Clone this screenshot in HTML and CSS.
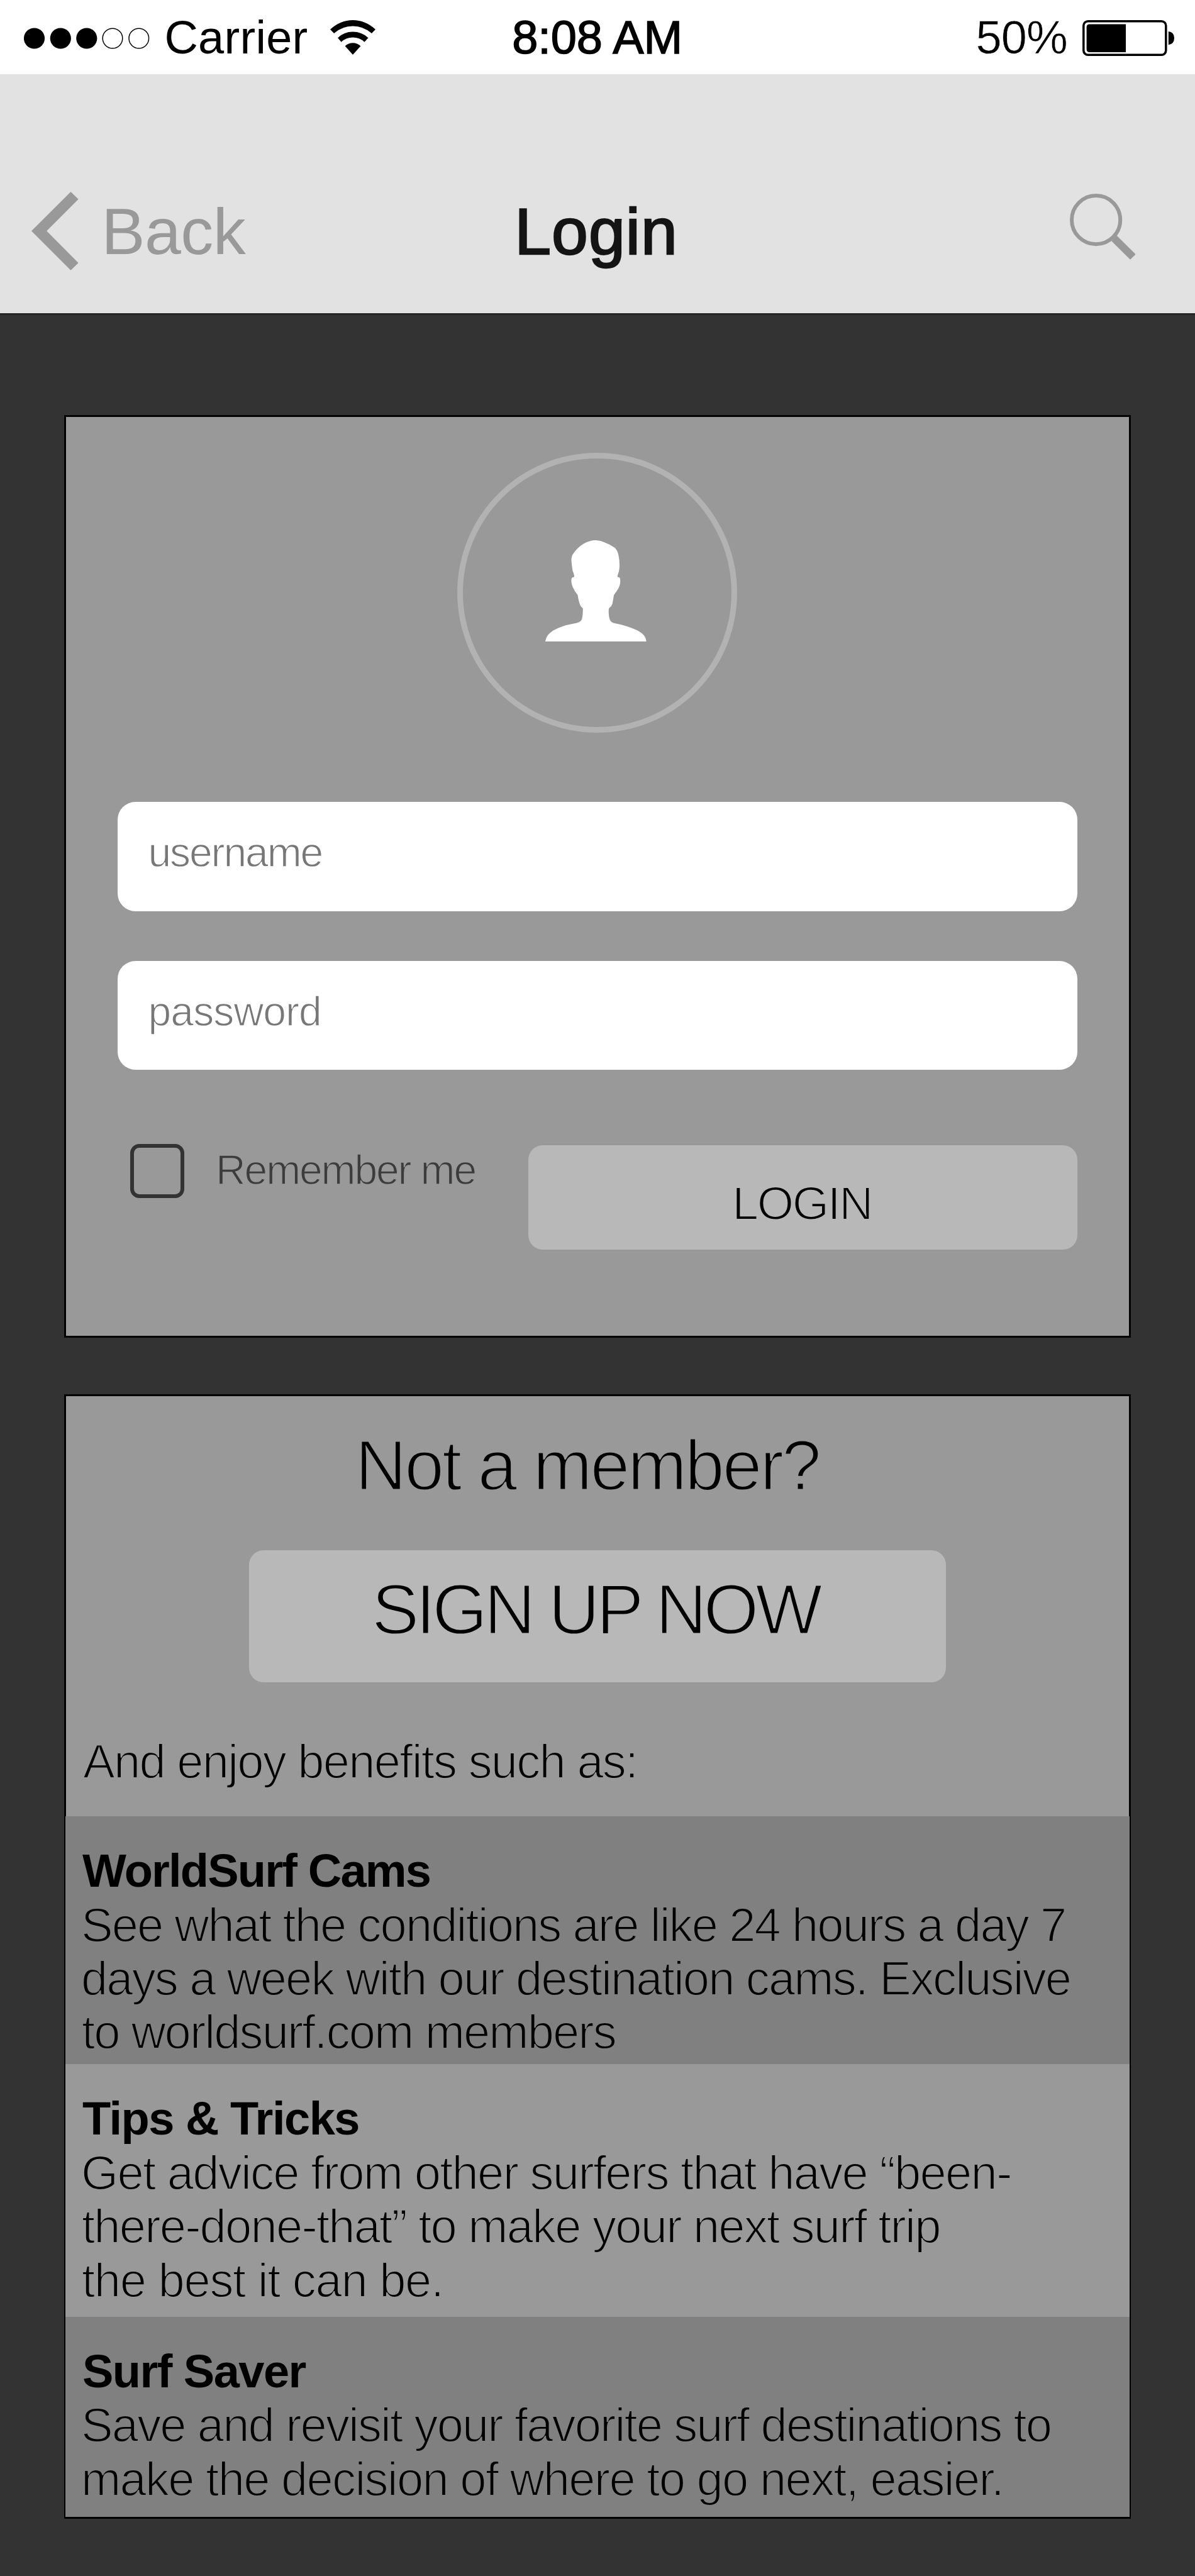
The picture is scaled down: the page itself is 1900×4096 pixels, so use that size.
FILE: index.html
```
<!DOCTYPE html>
<html lang="en">
<head>
<meta charset="utf-8">
<title>Login</title>
<link rel="stylesheet" href="styles.css">
</head>
<body>
<div class="status">
  <svg class="dots" viewBox="0 0 200 34">
    <g fill="#000"><circle cx="16.5" cy="17" r="16.6"/><circle cx="58.3" cy="17" r="16.6"/><circle cx="99.8" cy="17" r="16.6"/></g>
    <g fill="none" stroke="#000" stroke-width="1.5"><circle cx="141" cy="17" r="15.8"/><circle cx="182.8" cy="17" r="15.8"/></g>
  </svg>
  <span class="carrier">Carrier</span>
  <svg class="wifi" viewBox="866 98 119 168" preserveAspectRatio="none">
    <path d="M866 143Q893 98 925.500 98Q958 98 985 143L975 162Q953 127 925.500 127Q898 127 876 162Z"/>
    <path d="M886 184Q902 154.500 925.500 154.500Q949 154.500 966 184L956 204Q943 182 925.500 182Q908 182 895 204Z"/>
    <path d="M905 224Q914 209 925.500 209Q937 209 946 224L925.500 266Z"/>
  </svg>
  <span class="time">8:08 AM</span>
  <span class="percent">50%</span>
  <svg class="battery" viewBox="0 0 147 57">
    <rect x="1.800" y="1.800" width="131" height="53.400" rx="7" fill="none" stroke="#000" stroke-width="3.500"/>
    <path d="M69 6.500V51H11Q6.600 51 6.600 46V11.500Q6.600 6.500 11 6.500Z"/>
    <path d="M136.800 18Q146 19 146 28.500Q146 38 136.800 39.300Z"/>
  </svg>
</div>

<div class="nav">
  <div class="back">
    <svg class="chevron" viewBox="0 0 75 125"><path fill="#999" d="M62.500 0L74.600 11.800L24.200 62.200L74.600 112.900L62.500 124.700L0 62.200Z"/></svg>
    <span class="back-label">Back</span>
  </div>
  <div class="title">Login</div>
  <svg class="search" viewBox="0 0 104.500 105" fill="none" stroke="#999">
    <circle cx="41.600" cy="41.700" r="38.600" stroke-width="6"/>
    <path d="M70.500 71L100.300 100.600" stroke-width="12"/>
  </svg>
</div>

<main class="page">
  <section class="card login-card">
    <div class="avatar">
      <svg class="person" viewBox="577 598 411 444" preserveAspectRatio="none">
        <path fill="#fff" d="M577 1042Q580 1020 592 1008C608 988 650 970 690 963C710 959 721 956 726 943Q730 925 730 897Q729 893 724 890Q718 884 715 870Q710 850 709 838Q707 834 703 829Q697 822 694 813C687 803 683 787 683 775Q683 762 688 760Q695 761 695 755Q694 746 688 731Q684 705 683 685Q684 666 690 658Q708 630 732 614Q757 598 783 598Q802 599 820 608Q842 617 859 630Q872 643 875 664Q880 688 879 715Q878 733 873 746Q870 755 871 759Q874 760 879 761Q883 767 882 778C882 797 873 812 866 823Q857 835 856 839Q853 860 850 876Q846 889 838 894Q835 896 835 903Q834 930 840 946Q844 958 862 962Q905 971 942 988C970 1001 987 1016 988 1042Z"/>
      </svg>
    </div>
    <div class="field username">username</div>
    <div class="field password">password</div>
    <div class="actions">
      <span class="checkbox"></span>
      <span class="remember">Remember me</span>
      <div class="button login-button">LOGIN</div>
    </div>
  </section>

  <section class="card member-card">
    <div class="question">Not a member?</div>
    <div class="button signup-button">SIGN UP NOW</div>
    <div class="intro">And enjoy benefits such as:</div>
    <div class="benefit cams">
      <div class="heading h-cams">WorldSurf Cams</div>
      <div class="line t4">See what the conditions are like 24 hours a day 7</div>
      <div class="line t3">days a week with our destination cams. Exclusive</div>
      <div class="line t4 nudge">to worldsurf.com members</div>
    </div>
    <div class="benefit tips">
      <div class="heading h-tips">Tips &amp; Tricks</div>
      <div class="line t1">Get advice from other surfers that have “been-</div>
      <div class="line t2 nudge">there-done-that” to make your next surf trip</div>
      <div class="line t0 nudge">the best it can be.</div>
    </div>
    <div class="benefit saver">
      <div class="heading h-saver">Surf Saver</div>
      <div class="line t3">Save and revisit your favorite surf destinations to</div>
      <div class="line t1">make the decision of where to go next, easier.</div>
    </div>
  </section>
</main>
</body>
</html>
```

FILE: styles.css
```
* { box-sizing: border-box; }

body {
  margin: 0;
  width: 1900px;
  background: #333;
  color: #000;
  font-family: "Liberation Sans", Arial, sans-serif;
  white-space: nowrap;
  overflow: hidden;
}

svg { display: block; flex: none; }

/* status bar */
.status {
  display: flex;
  align-items: flex-start;
  height: 118px;
  padding: 17.700px 0 0 38.400px;
  background: #fff;
  font-size: 74px;
  line-height: 83px;
}
.dots { width: 200px; height: 34px; margin-top: 26px; }
.carrier { width: 228px; margin-left: 23px; letter-spacing: .29px; }
.wifi { width: 72px; height: 55px; margin: 14.300px 0 0 35.500px; }
.time {
  width: 271px;
  margin-left: 217.400px;
  letter-spacing: -.1px;
  -webkit-text-stroke: 1.500px #000;
}
.percent {
  width: 145px;
  margin-left: 466.300px;
  letter-spacing: -.96px;
  -webkit-text-stroke: .6px #fff;
}
.battery { width: 147px; height: 57px; margin: 14.300px 0 0 24.600px; }

/* navigation bar */
.nav {
  display: grid;
  grid-template-columns: 1fr auto 1fr;
  align-items: start;
  height: 383px;
  padding-top: 187px;
  background: #e2e2e2;
  border-bottom: 3px solid #262626;
  font-size: 104px;
  line-height: 120px;
}
.back { display: flex; padding-left: 50.300px; }
.chevron { width: 75px; height: 125px; }
.back-label { margin: 3px 0 0 36px; color: #999; letter-spacing: -.6px; }
.title {
  margin-top: 3px;
  padding-right: 4px;
  color: #141414;
  letter-spacing: 1px;
  -webkit-text-stroke: 2.500px #141414;
}
.search { width: 104.500px; height: 105px; margin: 3px 95px 0 0; justify-self: end; }

/* cards */
.page {
  display: flex;
  flex-direction: column;
  gap: 90px;
  padding: 159px 102.500px 91px 102px;
}
.card {
  display: flex;
  flex-direction: column;
  background: #999;
  border: 3px solid #000;
}
.button { background: #b8b8b8; border-radius: 23px; }

.login-card { height: 1467.400px; padding: 56.700px 81.500px 0; }
.avatar {
  align-self: center;
  width: 445px;
  height: 445.700px;
  border: 9px solid #b2b2b2;
  border-radius: 50%;
  padding: 130px 0 0 131px;
}
.person { width: 160.600px; height: 161.400px; }
.field {
  height: 173.700px;
  padding: 43px 0 0 49px;
  border-radius: 28.500px;
  background: #fff;
  color: #777;
  font-size: 66px;
  line-height: 74px;
  -webkit-text-stroke: 1.300px #fff;
}
.username { margin-top: 110px; letter-spacing: -2.100px; }
.password { margin-top: 78.600px; letter-spacing: -.88px; }
.actions { display: flex; align-items: flex-start; margin: 117.500px 0 0 20.700px; }
.checkbox {
  width: 86.200px;
  height: 86px;
  border: 6px solid #333;
  border-radius: 14.500px;
}
.remember {
  width: 412.900px;
  margin: 4px 0 0 49.700px;
  color: #3c3c3c;
  font-size: 66px;
  line-height: 74px;
  letter-spacing: -2.140px;
  -webkit-text-stroke: 1.500px #999;
}
.login-button {
  width: 872.600px;
  height: 166.400px;
  margin: 2px 0 0 84px;
  padding: 50.400px 0 0 324.400px;
  font-size: 75px;
  line-height: 84px;
  letter-spacing: -2.360px;
  -webkit-text-stroke: 2px #b8b8b8;
}

.member-card { height: 1787.700px; padding-top: 47px; }
.question {
  margin-left: 459.700px;
  font-size: 113px;
  line-height: 126px;
  letter-spacing: -3.130px;
  -webkit-text-stroke: 2.800px #999;
}
.signup-button {
  width: 1108.800px;
  height: 211.200px;
  margin: 71.400px 0 0 290.600px;
  padding: 31px 0 0 195.500px;
  border-radius: 23px;
  font-size: 113px;
  line-height: 126px;
  letter-spacing: -5.350px;
  -webkit-text-stroke: 2.800px #b8b8b8;
}
.intro {
  margin: 83.200px 0 44.500px 27px;
  font-size: 76px;
  line-height: 85.400px;
  letter-spacing: -1.780px;
  -webkit-text-stroke: 2px #999;
}

.benefit {
  margin: 0 -1px;
  padding: 44.500px 0 0 25px;
  font-size: 76px;
  line-height: 85.400px;
  flex: none;
}
.cams { height: 394.400px; background: #808080; }
.tips { height: 401.600px; background: #999; }
.saver { height: 318.500px; background: #808080; }
.cams .line, .saver .line { -webkit-text-stroke: 2px #808080; }
.tips .line { -webkit-text-stroke: 2px #999; }

.heading { padding-left: 2px; font-size: 74px; font-weight: bold; }
.h-cams { letter-spacing: -1.800px; }
.h-tips { letter-spacing: -1.480px; }
.h-saver { letter-spacing: -1.540px; }

.t0 { letter-spacing: -1.320px; }
.t1 { letter-spacing: -1.740px; }
.t2 { letter-spacing: -1.820px; }
.t3 { letter-spacing: -1.900px; }
.t4 { letter-spacing: -1.940px; }
.nudge { padding-left: 1px; }
```
